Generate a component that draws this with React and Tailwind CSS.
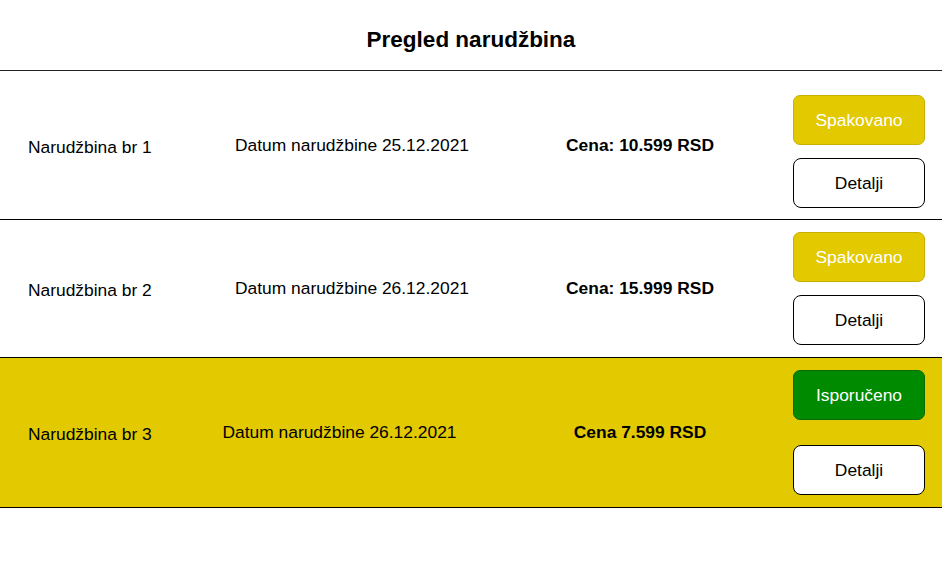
const orders = [
  { id: 1, date: '25.12.2021', price: 'Cena: 10.599 RSD', status: 'Spakovano' },
  { id: 2, date: '26.12.2021', price: 'Cena: 15.999 RSD', status: 'Spakovano' },
  { id: 3, date: '26.12.2021', price: 'Cena 7.599 RSD', status: 'Isporučeno' },
];

const OrderRow = ({ order, index }) => {
  const delivered = order.status === 'Isporučeno';
  const first = index === 0;

  return (
    <div
      className={`grid grid-cols-[200px_304px_272px_149px] items-center border-b border-black ${
        first ? 'pt-[12px] pb-[11px]' : 'py-[12px]'
      } ${delivered ? 'bg-[#e2c900]' : 'bg-white'}`}
    >
      <div className="pl-[28px] pt-[3px] text-[17.4px] text-black">Narudžbina br {order.id}</div>
      <div className="flex justify-center">
        <span className={`text-[17.4px] text-black ${delivered ? 'mr-[25px]' : ''}`}>
          Datum narudžbine {order.date}
        </span>
      </div>
      <div className="text-center text-[17.4px] font-bold text-black">{order.price}</div>
      <div
        className={`flex flex-col pl-[17px] ${delivered ? 'gap-[25px]' : 'gap-[13px]'} ${
          first ? 'mt-[12px]' : ''
        }`}
      >
        <button
          className={`h-[50px] w-[132px] rounded-[7px] border text-[17.4px] text-white ${
            delivered ? 'bg-[#008a00] border-[#0a6a0a]' : 'bg-[#e2c900] border-[#c8b000]'
          }`}
        >
          {order.status}
        </button>
        <button className="h-[50px] w-[132px] rounded-[8px] border border-black bg-white text-[17.4px] text-black">
          Detalji
        </button>
      </div>
    </div>
  );
};

const App = () => {
  return (
    <div className="min-h-[565px] w-full bg-white font-['Liberation_Sans',Arial,sans-serif]">
      <div className="flex h-[71px] items-center justify-center border-b border-[#222] pt-[10px]">
        <h1 className="text-[22.5px] font-bold text-black">Pregled narudžbina</h1>
      </div>
      {orders.map((order, i) => (
        <OrderRow key={order.id} order={order} index={i} />
      ))}
    </div>
  );
};

export default App;
